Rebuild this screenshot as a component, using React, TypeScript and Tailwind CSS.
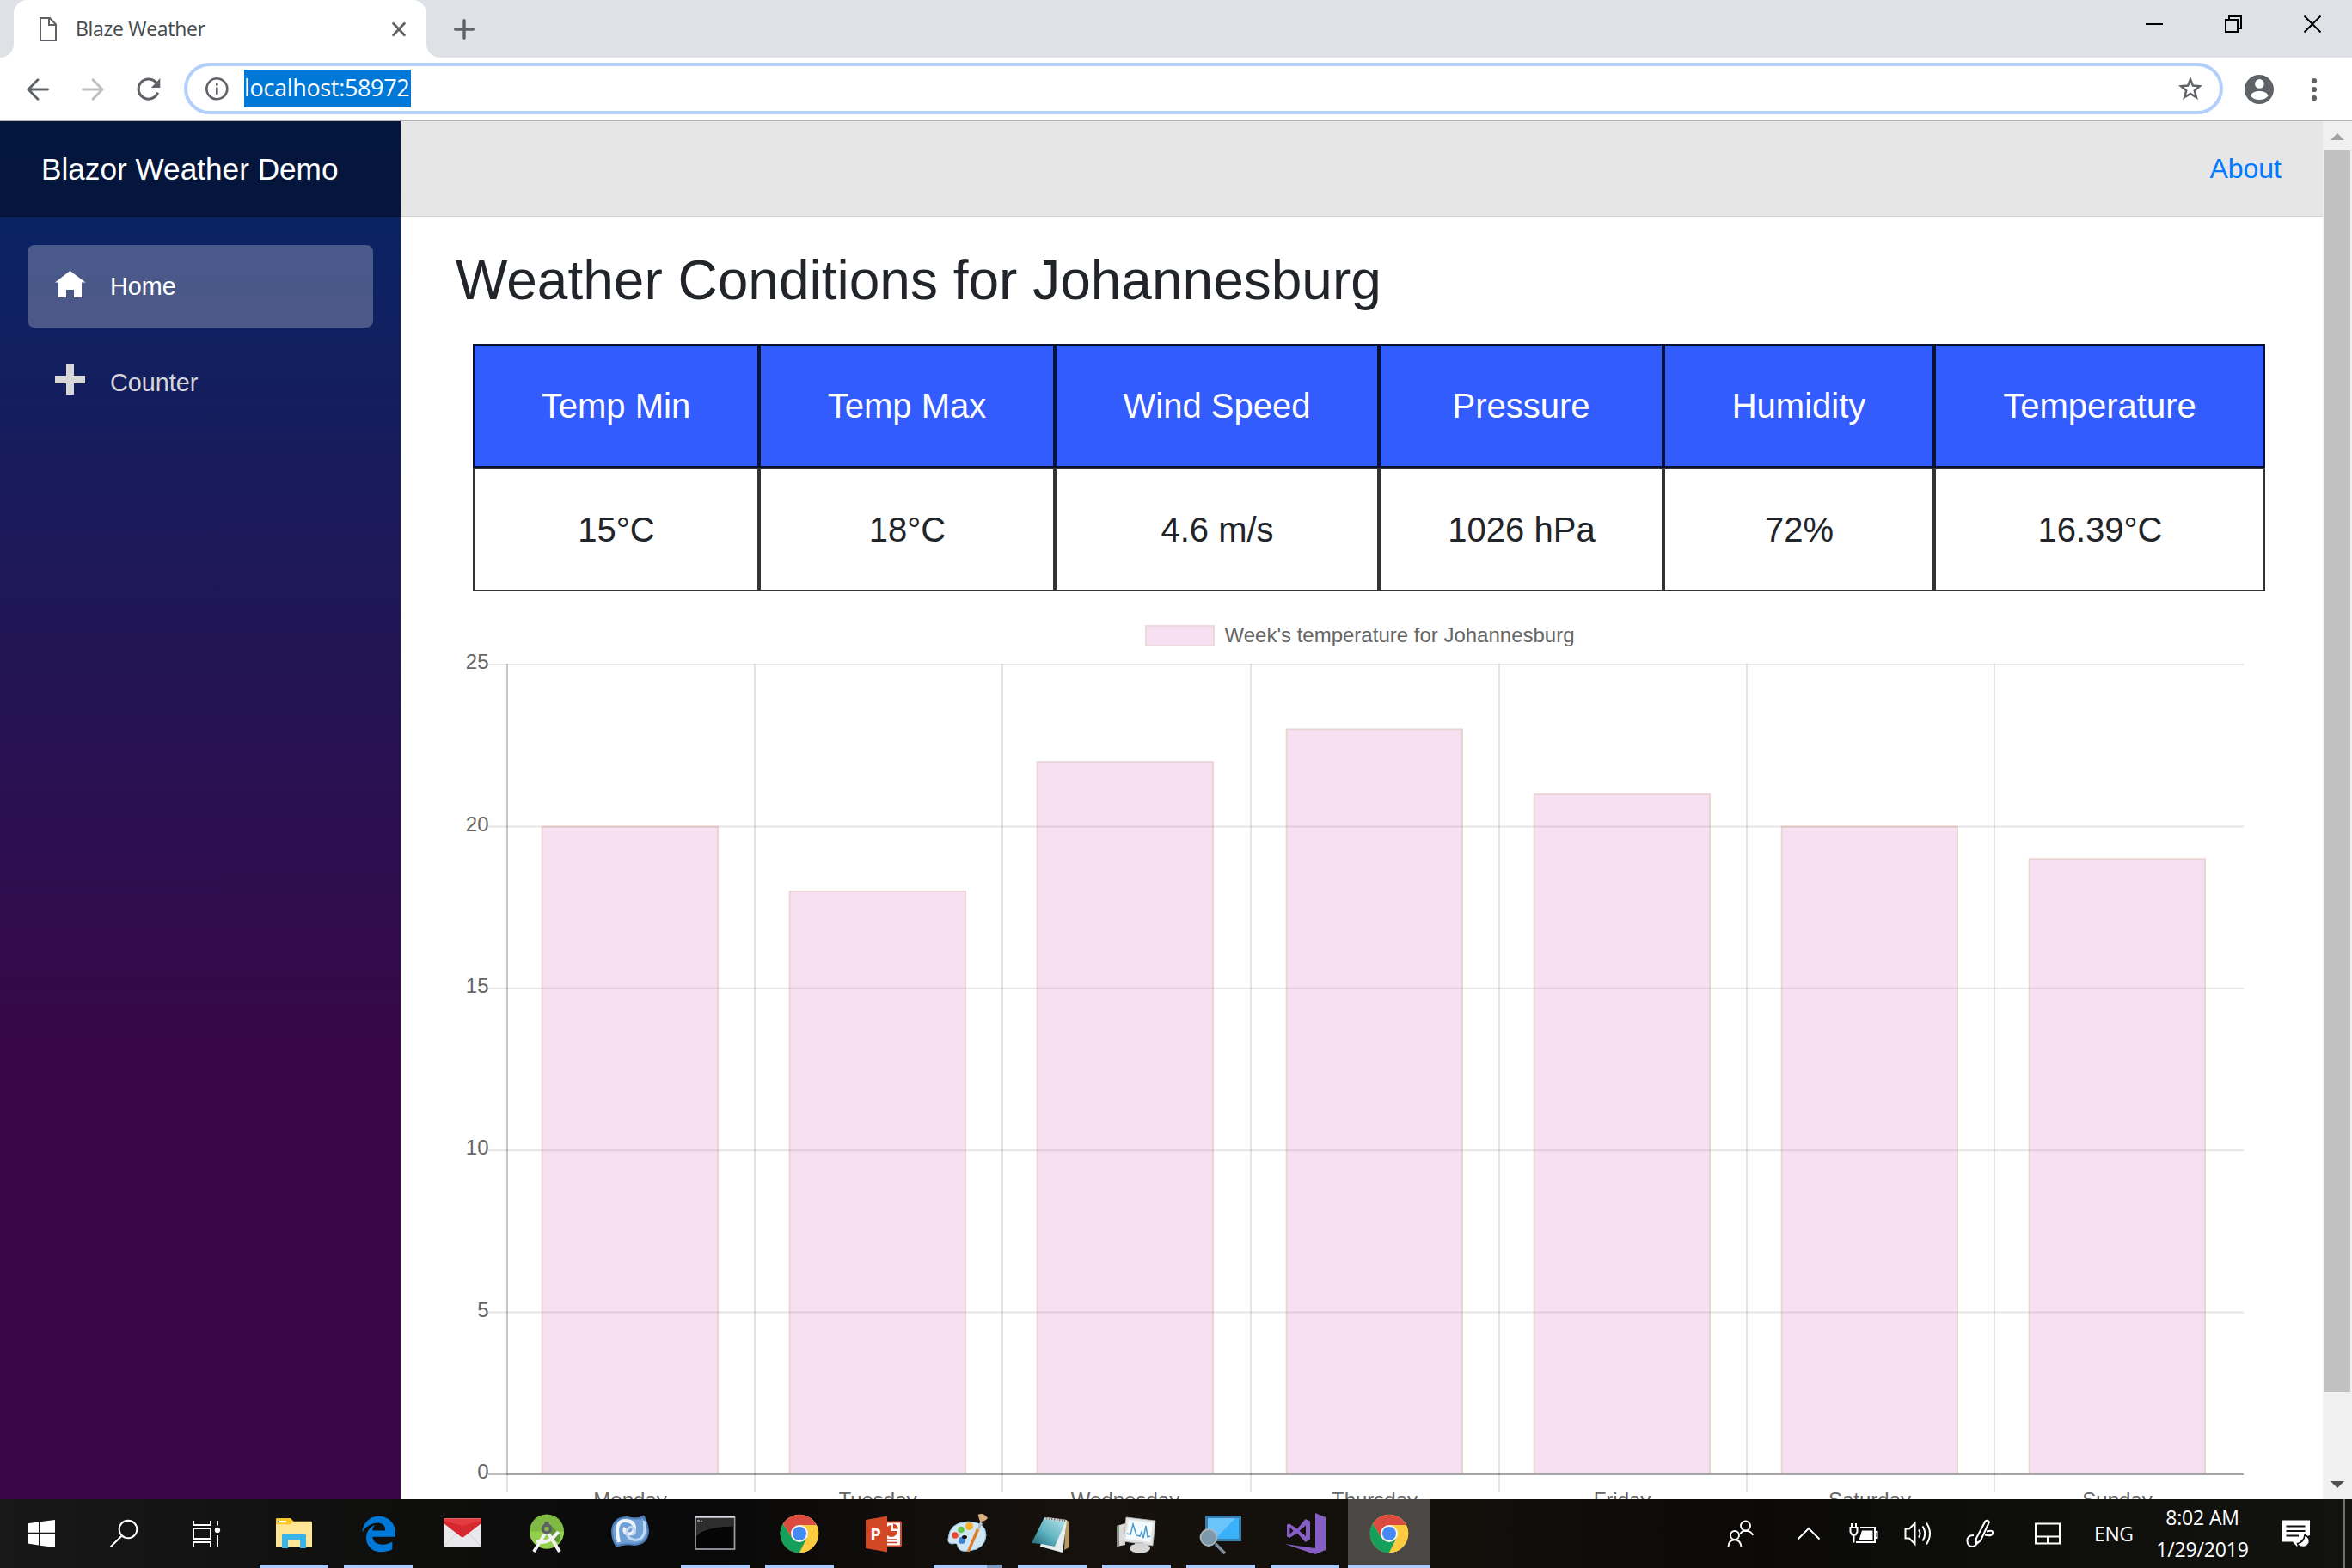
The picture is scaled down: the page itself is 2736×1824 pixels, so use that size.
import React from "react";
import { FaEdgeLegacy } from "react-icons/fa";

const COLUMNS = [
  { label: "Temp Min", value: "15°C" },
  { label: "Temp Max", value: "18°C" },
  { label: "Wind Speed", value: "4.6 m/s" },
  { label: "Pressure", value: "1026 hPa" },
  { label: "Humidity", value: "72%" },
  { label: "Temperature", value: "16.39°C" },
];

const DAYS = [
  { name: "Monday", temp: 20 },
  { name: "Tuesday", temp: 18 },
  { name: "Wednesday", temp: 22 },
  { name: "Thursday", temp: 23 },
  { name: "Friday", temp: 21 },
  { name: "Saturday", temp: 20 },
  { name: "Sunday", temp: 19 },
];

const BAR_X = [630, 918, 1206, 1496, 1784, 2072, 2360];
const GRID_X = [878, 1166, 1455, 1744, 2032, 2320];
const TICKS = [0, 5, 10, 15, 20, 25];
const yOf = (v: number) => 1715 - (v * 942) / 25;

/* ---------- browser chrome ---------- */

function TabStrip() {
  return (
    <div className="flex h-[67px] items-stretch bg-[#dee1e6]">
      <div className="w-4 bg-white">
        <div className="h-full rounded-br-[16px] bg-[#dee1e6]" />
      </div>
      <div className="flex w-[480px] items-center rounded-t-[16px] bg-white pl-[30px] pr-6">
        <svg width="20" height="28" viewBox="0 0 20 28" fill="none" stroke="#5f6368" strokeWidth="2">
          <path d="M1 1H12L19 8.5V27H1Z" />
          <path d="M11 1V9H19" />
        </svg>
        <span className="-mt-0.5 ml-[22px] flex-1 whitespace-nowrap font-['Open_Sans',sans-serif] text-[23px] leading-8 tracking-[-0.3px] text-[#45494d]">
          Blaze Weather
        </span>
        <svg width="16" height="18" viewBox="0 0 16 18" stroke="#5f6368" strokeWidth="2.8" strokeLinecap="round">
          <path d="M1.6 2.2L14.4 15.8M14.4 2.2L1.6 15.8" />
        </svg>
      </div>
      <div className="w-4 bg-white">
        <div className="h-full rounded-bl-[16px] bg-[#dee1e6]" />
      </div>
      <div className="flex flex-1 items-center pl-4">
        <svg width="24" height="24" viewBox="0 0 24 24" stroke="#5f6368" strokeWidth="3.4" strokeLinecap="round">
          <path d="M12 1.7V22.3M1.7 12H22.3" />
        </svg>
      </div>
      <div className="flex h-14 gap-[72px] pr-9">
        <svg className="mt-[18px]" width="20" height="20" viewBox="0 0 20 20" stroke="#000" strokeWidth="2">
          <path d="M0 10H20" />
        </svg>
        <svg className="mt-[18px]" width="20" height="20" viewBox="0 0 20 20" fill="none" stroke="#000" strokeWidth="2">
          <path d="M1 5H15V19H1ZM5 5V1H19V15H15" />
        </svg>
        <svg className="mt-[18px]" width="20" height="20" viewBox="0 0 20 20" stroke="#000" strokeWidth="2">
          <path d="M0.5 0.5L19.5 19.5M19.5 0.5L0.5 19.5" />
        </svg>
      </div>
    </div>
  );
}

function Toolbar() {
  return (
    <div className="flex h-[74px] items-center border-b border-[#b4b4b6] bg-white pl-[31px]">
      <svg width="26" height="26" viewBox="0 0 26 26" fill="none" stroke="#5f6368" strokeWidth="2.9" strokeLinecap="round">
        <path d="M24.5 13H2.5M13 1.8L2 13L13 24.2" />
      </svg>
      <svg className="ml-[38px]" width="26" height="26" viewBox="0 0 26 26" fill="none" stroke="#bcbec0" strokeWidth="2.9" strokeLinecap="round">
        <path d="M1.5 13H23.5M13 1.8L24 13L13 24.2" />
      </svg>
      <svg className="ml-[38px]" width="28" height="28" viewBox="0 0 28 28" fill="none" stroke="#5f6368" strokeWidth="3">
        <path d="M23.2 6.8A11.6 11.6 0 1 0 24.6 17.6" />
        <path d="M27.3 1V12H16.8Z" fill="#5f6368" stroke="none" />
      </svg>
      <div className="-mt-px ml-[27px] flex h-[60px] w-[2372px] items-center rounded-full border-4 border-[#b3cffc] pl-5 pr-5">
        <svg width="28" height="28" viewBox="0 0 28 28" fill="none" stroke="#5f6368" strokeWidth="2.6">
          <circle cx="14.3" cy="14.3" r="12" />
          <path d="M14.3 12.6V20.8M14.3 7.8V10.6" />
        </svg>
        <span className="ml-[18px] flex h-11 w-[194px] items-center whitespace-nowrap bg-[#0078d7] pb-0.5 font-['Open_Sans',sans-serif] text-[27px] leading-[42px] tracking-[-0.33px] text-white">
          localhost:58972
        </span>
        <svg className="ml-auto" width="28" height="28" viewBox="0 0 28 28" fill="none" stroke="#5f6368" strokeWidth="2.5" strokeLinejoin="miter">
          <path d="M14 3.2L16.9 10.6L25 11.2L18.8 16.4L20.9 24.2L14 19.9L7.1 24.2L9.2 16.4L3 11.2L11.1 10.6Z" />
        </svg>
      </div>
      <svg className="ml-[25px]" width="34" height="34" viewBox="0 0 34 34">
        <circle cx="17" cy="17" r="17" fill="#5f6368" />
        <circle cx="17.4" cy="10.4" r="5.3" fill="#fff" />
        <path d="M7 24.5C8 20.5 13 18.9 17.2 18.9S26.5 20.5 27.5 24.5C25 27.6 21.5 29 17.2 29S9.5 27.6 7 24.5Z" fill="#fff" />
      </svg>
      <svg className="ml-[43px]" width="8" height="28" viewBox="0 0 8 28" fill="#5f6368">
        <circle cx="4" cy="4" r="3.1" />
        <circle cx="4" cy="14" r="3.1" />
        <circle cx="4" cy="24" r="3.1" />
      </svg>
    </div>
  );
}

/* ---------- application ---------- */

function Sidebar() {
  return (
    <aside className="flex w-[466px] flex-col bg-[linear-gradient(180deg,#052767_0%,#3a0647_70%)] font-['Liberation_Sans',sans-serif]">
      <div className="flex h-28 items-center bg-black/40 pl-12 text-[35.2px] text-white">
        <span className="whitespace-nowrap">Blazor Weather Demo</span>
      </div>
      <nav className="flex flex-col gap-4 px-8 pt-8 text-[28.8px]">
        <a className="flex h-24 items-center rounded-lg bg-white/25 pl-8 text-white">
          <svg className="-mt-1" width="36" height="32" viewBox="0 0 36 32" fill="currentColor">
            <path d="M17.5 0L35.5 13.5H31V31H22V22H13V31H4V13.5H0Z" />
          </svg>
          <span className="ml-7 pt-0.5">Home</span>
        </a>
        <a className="flex h-24 items-center pl-8 text-[#d7d7d7]">
          <svg className="-mt-1.5" width="36" height="36" viewBox="0 0 36 36" fill="currentColor">
            <path d="M13 0H22V13H35V22H22V35H13V22H0V13H13Z" />
          </svg>
          <span className="ml-7 pt-0.5">Counter</span>
        </a>
      </nav>
    </aside>
  );
}

function ConditionsTable() {
  return (
    <div className="ml-5 grid w-[2085px] grid-cols-[333px_344px_377px_331px_315px_385px] text-center text-[40px]">
      {COLUMNS.map((c) => (
        <div key={c.label} className="flex h-36 items-center justify-center border-2 border-[#0a1233] bg-[#335cff] text-white">
          {c.label}
        </div>
      ))}
      {COLUMNS.map((c) => (
        <div key={c.value} className="flex h-36 items-center justify-center border-2 border-[#333333] bg-white pl-px text-[#212529]">
          {c.value}
        </div>
      ))}
    </div>
  );
}

function TemperatureChart() {
  return (
    <svg className="block" width="2106" height="1056" viewBox="530 688 2106 1056" fontFamily="'Liberation Sans', sans-serif" fontSize="24" fill="#666">
      <rect x="1333" y="728" width="79" height="23" fill="#f7e0f1" stroke="#ecd9dc" strokeWidth="2" />
      <text x="1424.5" y="746.5">Week's temperature for Johannesburg</text>
      {TICKS.map((t) => (
        <g key={t}>
          <path d={`M568 ${yOf(t)}H2610`} stroke="#000" strokeOpacity={t === 0 ? 0.25 : 0.1} strokeWidth="2" />
          <text x="568.5" y={yOf(t) + 5.2} textAnchor="end">{t}</text>
        </g>
      ))}
      {GRID_X.map((x) => (
        <path key={x} d={`M${x} 772V1736`} stroke="#000" strokeOpacity="0.1" strokeWidth="2" />
      ))}
      <path d="M590 772V1716" stroke="#000" strokeOpacity="0.22" strokeWidth="2" />
      <path d="M590 1716V1736" stroke="#000" strokeOpacity="0.1" strokeWidth="2" />
      <path d="M590 1715H2610" stroke="#000" strokeOpacity="0.13" strokeWidth="2" />
      {DAYS.map((d, i) => (
        <g key={d.name}>
          <rect x={BAR_X[i]} y={yOf(d.temp) - 0.5} width="206" height={1714 - yOf(d.temp)} fill="#d966b9" fillOpacity="0.2" />
          <path d={`M${BAR_X[i] + 0.5} 1714V${yOf(d.temp)}H${BAR_X[i] + 205}V1714`} fill="none" stroke="#bfa26a" strokeOpacity="0.22" strokeWidth="2" />
          <text x={BAR_X[i] + 103} y="1753" textAnchor="middle">{d.name}</text>
        </g>
      ))}
    </svg>
  );
}

function Scrollbar() {
  return (
    <div className="flex w-[34px] flex-col items-center justify-between bg-[#f0f0f0]">
      <svg width="34" height="34" viewBox="0 0 34 34">
        <path d="M9 22L17 14L25 22Z" fill="#a3a3a3" />
      </svg>
      <div className="h-[1444px] w-[30px] bg-[#c1c1c1]" />
      <div className="flex-1" />
      <svg width="34" height="34" viewBox="0 0 34 34">
        <path d="M9 13L17 21L25 13Z" fill="#505050" />
      </svg>
    </div>
  );
}

/* ---------- taskbar icons, each on a 48px board ---------- */

const Icon = ({ children }: { children: React.ReactNode }) => (
  <svg width="48" height="48" viewBox="0 0 48 48" fill="none" className="overflow-visible">
    {children}
  </svg>
);

const StartIcon = () => (
  <Icon>
    <path fill="#fff" d="M8 12.3L21 10.5V22.7H8ZM22.2 10.3L40 8V22.7H22.2ZM8 24H21V37.6L8 35.6ZM22.2 24H40V40L22.2 37.8Z" />
  </Icon>
);

const SearchIcon = () => (
  <Icon>
    <g stroke="#fff" strokeWidth="2">
      <circle cx="29" cy="19" r="10.3" />
      <path d="M21.8 26.5L8.5 39.5" />
    </g>
  </Icon>
);

const TaskViewIcon = () => (
  <Icon>
    <g stroke="#fff" strokeWidth="2">
      <rect x="9" y="18" width="20" height="12" />
      <path d="M9 9V14H29V9M9 39V34H29V39M37 9V14.5M37 26V39" />
    </g>
    <circle cx="37" cy="20" r="3.2" fill="#fff" />
  </Icon>
);

const ExplorerIcon = () => (
  <Icon>
    <path d="M3 7.5Q3 6.3 4.5 6.3H20L23 9.7H43.5Q45 9.7 45 11V40H3Z" fill="#fee695" />
    <path d="M3 7.5Q3 6.3 4.5 6.3H20L23.5 9.7L20 13.3H3Z" fill="#fcc828" />
    <rect x="5" y="9" width="10" height="2.2" fill="#fff" />
    <rect x="5" y="9" width="2" height="2.2" fill="#3ab4e8" />
    <path d="M10 41V26Q10 24 12 24H36Q38 24 38 26V41H31V31H17V41Z" fill="#3ab4e8" />
  </Icon>
);

const MailIcon = () => (
  <Icon>
    <rect x="2" y="6" width="44" height="34" rx="1" fill="#e9e9ec" />
    <path d="M2 39L18 23H30L46 39" stroke="#cfcfd3" strokeWidth="1" />
    <path d="M2 6.5H46V12L26 27.5Q24 29 22 27.5L2 12Z" fill="#d5282f" />
    <path d="M2 6.5H46V9L24 15L2 9Z" fill="#e23b40" />
  </Icon>
);

const AndroidStudioIcon = () => (
  <Icon>
    <circle cx="24" cy="21.5" r="20" fill="#80b944" />
    <path d="M4 21.5A20 20 0 0 0 44 21.5Z" fill="#93cf4c" />
    <path d="M26 12L40 25L38 35L28 28Z" fill="#5e9438" />
    <path d="M12 32.5Q25 38 37.5 22" stroke="#f2f2f2" strokeWidth="4" />
    <path d="M22 24L9 45M26 24L39 45" stroke="#f2f2f2" strokeWidth="4" />
    <rect x="21.5" y="10" width="5" height="6" fill="#5f6063" />
    <circle cx="24" cy="18.5" r="4.5" stroke="#5f6063" strokeWidth="3.4" />
  </Icon>
);

const MonoDevelopIcon = () => (
  <Icon>
    <path d="M1 21Q2 4 20 4Q32 7 39 2.5Q44 10 45 21Q44 37 28 38Q16 36 7 40Q1 32 1 21Z" fill="#4c7db8" />
    <path d="M3 21Q4 7 19 6Q31 9 38 6Q42 13 43 21Q42 34 29 36Q17 34 8 37Q3 30 3 21Z" fill="#6f9fd4" />
    <path d="M10 34Q4 9 17 9Q28 9 28 18Q27 25 20.5 24.5Q15 23 17 17" stroke="#f1f5fa" strokeWidth="4" />
    <path d="M39 9Q43 31 29 31.500Q18 30 19 21Q22 14 27.500 18Q30 23 25 25.500" stroke="#c3d8f2" strokeWidth="3" />
  </Icon>
);

const ConsoleIcon = () => (
  <Icon>
    <rect x="1" y="4" width="45.5" height="38" fill="#050505" stroke="#9a9aa4" strokeWidth="1.8" />
    <path d="M2 27Q12 16 45.5 15.5V6H2Z" fill="#2e2e2e" />
    <path d="M1 4.5H46.5" stroke="#d8d8e2" strokeWidth="2.6" />
    <path d="M3 9H6M7 9.5H9" stroke="#aaa" strokeWidth="1.4" />
  </Icon>
);

const ChromeIcon = () => (
  <Icon>
    <circle cx="24" cy="24" r="22.3" fill="#fdcb3e" />
    <path d="M24 14H43.7A22.3 22.3 0 0 0 5 12.5L15.3 29Z" fill="#dc4b40" />
    <path d="M4.9 12.5A22.3 22.3 0 0 0 24 46.3L32.7 29L15.3 29Z" fill="#159f5b" />
    <path d="M32.7 29L24 46.3A22.3 22.3 0 0 0 43.7 14H24Z" fill="#fdcb3e" />
    <circle cx="24" cy="24" r="10" fill="#f4f4f4" />
    <circle cx="24" cy="24" r="8" fill="#4688f4" />
  </Icon>
);

const PowerPointIcon = () => (
  <Icon>
    <rect x="26" y="10.5" width="18" height="28" rx="1" fill="#fff" stroke="#d24726" strokeWidth="2" />
    <path d="M33 14V21H40A7 7 0 1 1 33 14Z" fill="#d24726" />
    <path d="M35 12.5A7 7 0 0 1 41 18.5H35Z" fill="#d24726" />
    <path d="M28 31H40M28 34.5H40" stroke="#d24726" strokeWidth="1.7" />
    <path d="M3 8L28 3.5V45.5L3 41Z" fill="#d24726" />
    <text x="8.3" y="31.5" fill="#fff" fontFamily="'Open Sans', sans-serif" fontWeight="700" fontSize="20">P</text>
  </Icon>
);

const PaintIcon = () => (
  <Icon>
    <path d="M1 30Q2 11 24 10Q45 10 45 26Q44 42 25 44Q14 46 12 39Q12 34 6 36Q0 36 1 30Z" fill="#cfe6f5" stroke="#8bbbd9" strokeWidth="1" />
    <circle cx="9" cy="26" r="3.8" fill="#e94b34" />
    <circle cx="16" cy="19.5" r="3.8" fill="#6bc34a" />
    <circle cx="25.5" cy="15.5" r="4.5" fill="#f6b12c" />
    <circle cx="17" cy="32" r="4" fill="#3f84cf" />
    <ellipse cx="20" cy="28" rx="3" ry="2" fill="#111" />
    <path d="M34 18L37 20L26 45Q24 46 23 44Z" fill="#e07b24" />
    <path d="M35 18L38 10L41 12L37.5 20Z" fill="#b9bec4" />
    <path d="M35.5 2Q42 -1 47 6Q44 10 38 10Z" fill="#dcae7d" />
  </Icon>
);

const NotepadIcon = () => (
  <Icon>
    <defs>
      <linearGradient id="notepad-cover" x1="0" y1="1" x2="1" y2="0">
        <stop offset="0" stopColor="#1f6370" />
        <stop offset="0.45" stopColor="#5fb4c2" />
        <stop offset="1" stopColor="#bfe6ec" />
      </linearGradient>
    </defs>
    <path d="M40 8L43.5 10V40L38 43Z" fill="#b99a5e" />
    <path d="M17 7L41 9L36 46L10 39Z" fill="#e8eef0" />
    <path d="M15 5L40 9L27 39L11 36L0 35Z" fill="url(#notepad-cover)" />
    <path d="M15 7L18 5L41 8L39 11Z" fill="#d8dfe1" />
    <path d="M17 6L40 9" stroke="#777" strokeWidth="2.6" strokeDasharray="1.5 1.5" />
  </Icon>
);

const PerformanceIcon = () => (
  <Icon>
    <path d="M1 15L11 12V37L1 39Z" fill="#dadada" />
    <path d="M1 15L4 14.5V38.5L1 39Z" fill="#8d8d8d" />
    <path d="M2 18H4V20H2Z" fill="#52c234" />
    <path d="M12 5L46 9L43 38L9 33Z" fill="#e3e3e3" stroke="#b5b5b5" strokeWidth="0.8" />
    <path d="M15 8L43 11.5L40 34L12 30Z" fill="#f4fbff" />
    <path d="M13 24L17 25L20 13L24 26L28 27L30 22L32 29L35 15L37 28L40 27" stroke="#4b9bc9" strokeWidth="1.5" />
    <path d="M22 34H32V40H22Z" fill="#bfbfbf" />
    <ellipse cx="28" cy="41" rx="12" ry="5.5" fill="#d6d6d6" />
  </Icon>
);

const MagnifierIcon = () => (
  <Icon>
    <rect x="6" y="3" width="42" height="30" fill="#3c7fab" />
    <rect x="9" y="6" width="36" height="24" fill="#3bb0fb" />
    <path d="M9 6H41L18 30H9Z" fill="#6cc4fd" />
    <circle cx="10" cy="28.5" r="9.5" fill="#7d98ab" stroke="#a9b4bc" strokeWidth="1.8" />
    <path d="M18 36L29 47" stroke="#7e8fa0" strokeWidth="3.6" />
  </Icon>
);

const VisualStudioIcon = () => (
  <Icon>
    <path d="M36 0L48 5V43L36 48L0.5 36L36 41Z" fill="#865fc5" />
    <path fillRule="evenodd" d="M3 13.5L6 12.5L15 18.5L24.5 7L30 9.5V31L24.5 34L15 23.5L6 29L3 27.5ZM6.5 17V24.5L10.5 20.8ZM25 14.5L17.5 20.8L25 27Z" fill="#865fc5" />
  </Icon>
);

const EdgeIcon = () => <FaEdgeLegacy size={43} color="#0078d7" />;

type AppItem = { icon: () => React.ReactElement; running?: boolean; stacked?: boolean };

const APPS: AppItem[] = [
  { icon: ExplorerIcon, running: true },
  { icon: EdgeIcon, running: true },
  { icon: MailIcon },
  { icon: AndroidStudioIcon },
  { icon: MonoDevelopIcon },
  { icon: ConsoleIcon, running: true },
  { icon: ChromeIcon, running: true },
  { icon: PowerPointIcon },
  { icon: PaintIcon, running: true, stacked: true },
  { icon: NotepadIcon, running: true },
  { icon: PerformanceIcon, running: true },
  { icon: MagnifierIcon, running: true },
  { icon: VisualStudioIcon, running: true },
];

function SystemTray() {
  return (
    <div className="ml-auto flex h-20 items-center font-['Open_Sans',sans-serif] text-[23px] text-white">
      <svg width="32" height="32" viewBox="0 0 32 32" fill="none" stroke="#fff" strokeWidth="1.9">
        <circle cx="21.5" cy="7" r="5.5" />
        <circle cx="9" cy="18" r="5" />
        <path d="M15.5 17Q16.5 12.8 21.5 12.8Q28.5 13 30 18M1.5 31Q2 23.2 9 23.2Q15.5 23.2 16.5 31" />
      </svg>
      <svg className="ml-[49px]" width="28" height="16" viewBox="0 0 28 16" fill="none" stroke="#fff" strokeWidth="2">
        <path d="M1.5 14.5L14 2L26.5 14.5" />
      </svg>
      <svg className="ml-[33px]" width="34" height="26" viewBox="0 0 34 26" fill="none" stroke="#fff" strokeWidth="2">
        <path d="M13 6H30V23H8M30 11H32.5V18H30" />
        <path d="M12 19L15 9.5H27.5V20H12Z" fill="#fff" stroke="none" />
        <path d="M3 1V6M8 1V6M5.5 15V23.5" />
        <path d="M1.5 6H9.5V11L7.5 14.5H3.5L1.5 11Z" />
      </svg>
      <svg className="ml-[30px]" width="34" height="30" viewBox="0 0 34 30" fill="none" stroke="#fff" strokeWidth="2">
        <path d="M1.5 9.5H6L12.5 3V27L6 20.5H1.5Z" />
        <path d="M17 10.5Q20 15 17 19.5M21.5 6.5Q27 15 21.5 23.5M26 2.5Q34 15 26 27.5" />
      </svg>
      <svg className="ml-[37px]" width="34" height="34" viewBox="0 0 34 34" fill="none" stroke="#fff" strokeWidth="2">
        <path d="M13 22.5L23.5 2.5Q26 0.5 28 3.5L18 25L12.5 29.5Z" />
        <path d="M10 19Q2 19 2.5 26Q3 32 8.5 32Q13.5 31.5 14 26M25 14.5Q33 12 32 17Q30.5 20.5 23 18.5" />
      </svg>
      <svg className="ml-[47px]" width="30" height="26" viewBox="0 0 30 26" fill="none" stroke="#fff" strokeWidth="2">
        <path d="M1 1.5H29V24.5H1ZM1 16.5H29M15 16.5V24.5" />
      </svg>
      <span className="ml-[39px] w-11 whitespace-nowrap tracking-[-0.4px]">ENG</span>
      <div className="ml-[27px] flex w-[110px] flex-col items-center whitespace-nowrap leading-[37px] tracking-[-0.15px]">
        <span>8:02 AM</span>
        <span>1/29/2019</span>
      </div>
      <svg className="ml-[37px]" width="34" height="34" viewBox="0 0 34 34">
        <path d="M0.5 1.5H33V19L27 21L20 28L18 32L13 26.5H0.5Z" fill="#fff" />
        <path d="M5.5 8.5H27.5M5.5 14H27.5M5.5 19.5H20" stroke="#111" strokeWidth="2.2" />
        <path d="M27 18.5Q34 22 32 28Q29 34 22 32Q18.5 30.5 18.5 28.5Q26 28 27 18.5Z" fill="#fff" stroke="#111" strokeWidth="1.6" />
      </svg>
      <div className="ml-[38px] mr-2 h-20 w-0.5 bg-[#6f6f6d]" />
    </div>
  );
}

function Taskbar() {
  return (
    <footer className="flex h-20 bg-[linear-gradient(90deg,#171817_0%,#0e0e0d_18%,#090909_30%,#16110d_45%,#120f0b_62%,#0b0a09_75%,#12130f_100%)]">
      {[StartIcon, SearchIcon, TaskViewIcon].map((I, i) => (
        <div key={i} className="flex w-24 items-center justify-center">
          <I />
        </div>
      ))}
      <div className="w-[5px]" />
      {APPS.map(({ icon: I, running, stacked }, i) => (
        <div key={i} className="flex w-[98px] flex-col items-center pt-4">
          <div className="flex h-12 items-center justify-center">
            <I />
          </div>
          {running && (
            <div className="mt-3 flex h-1 w-20 justify-end bg-[#adcbfb]">
              {stacked && <div className="w-[18px] bg-[#7f98be]" />}
            </div>
          )}
        </div>
      ))}
      <div className="ml-px flex w-24 flex-col items-center bg-[#4b4744] pt-4">
        <ChromeIcon />
        <div className="mt-3 h-1 w-full bg-[#adcbfb]" />
      </div>
      <SystemTray />
    </footer>
  );
}

export default function App() {
  return (
    <div className="flex h-[1824px] w-[2736px] flex-col overflow-hidden bg-white">
      <TabStrip />
      <Toolbar />
      <div className="flex h-[1603px] overflow-hidden">
        <Sidebar />
        <main className="flex flex-1 flex-col font-['Liberation_Sans',sans-serif]">
          <div className="flex h-28 items-center justify-end border-b-2 border-[#d6d5d5] bg-[#e6e6e6] pr-12 text-[32px] text-[#007bff]">
            About
          </div>
          <div className="pl-16">
            <h1 className="pt-[33px] text-[64px] leading-[80px] whitespace-nowrap text-[#212529]">
              Weather Conditions for Johannesburg
            </h1>
            <div className="mt-[34px]">
              <ConditionsTable />
            </div>
            <TemperatureChart />
          </div>
        </main>
        <Scrollbar />
      </div>
      <Taskbar />
    </div>
  );
}
